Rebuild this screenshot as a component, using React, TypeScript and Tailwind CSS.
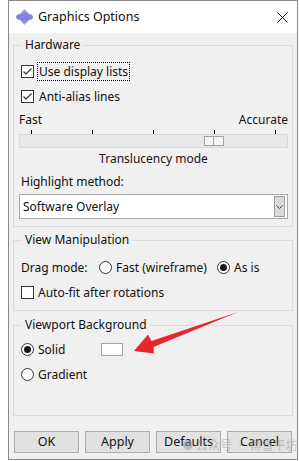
import React from "react";

const Check = ({ checked }: { checked: boolean }) => (
  <span className="w-[13px] h-[13px] border border-[#333333] bg-white flex items-center justify-center shrink-0">
    {checked && (
      <svg width="11" height="11" viewBox="0 0 11 11">
        <path d="M1.5 5.5 L4 8 L9.5 2.5" stroke="#333333" strokeWidth="1.2" fill="none" />
      </svg>
    )}
  </span>
);

const Radio = ({ checked }: { checked: boolean }) => (
  <span className="w-[13px] h-[13px] rounded-full border border-[#333333] bg-white flex items-center justify-center shrink-0">
    {checked && <span className="w-[7px] h-[7px] rounded-full bg-[#1a1a1a]" />}
  </span>
);

const CheckRow = ({ label, checked, focus }: { label: string; checked: boolean; focus?: boolean }) => (
  <div className="flex items-center h-[25px] ml-[2px]">
    <Check checked={checked} />
    <span className={`ml-[3px] px-[1px] leading-[17px] border border-dotted ${focus ? "border-black" : "border-transparent"}`}>{label}</span>
  </div>
);

const Group = ({ title, className, children }: { title: string; className?: string; children: React.ReactNode }) => (
  <fieldset className={`border border-[#dcdcdc] ${className ?? ""}`}>
    <legend className="ml-[8px] px-[3px] leading-[18px]">{title}</legend>
    {children}
  </fieldset>
);

export default function App() {
  return (
    <div className="w-[299px] h-[461px] bg-white pl-[8px] font-['Noto_Sans','Noto_Sans_CJK_SC',sans-serif] text-[12px] text-[#111111] relative overflow-hidden">
      <div className="w-[290px] h-[460px] border border-[#8a8a8a] flex flex-col bg-[#f0f0f0]">
        {/* title bar */}
        <div className="h-[32px] bg-white flex items-center pl-[7px] pr-[9px] shrink-0">
          <svg width="17" height="16" viewBox="0 0 17 16">
            <defs>
              <linearGradient id="ic" x1="0" y1="0" x2="0" y2="1">
                <stop offset="0" stopColor="#a9a9ec" />
                <stop offset="0.5" stopColor="#7373cf" />
                <stop offset="1" stopColor="#a9a9ec" />
              </linearGradient>
            </defs>
            <path d="M8.5 0 L13 5 L16 5.8 L17 8 L16 10.2 L13 11 L8.5 16 L4 11 L1 10.2 L0 8 L1 5.8 L4 5 Z" fill="url(#ic)" />
            <rect x="1" y="6.3" width="15" height="3.4" fill="#8585d9" />
          </svg>
          <span className="ml-[5px] text-[12.5px]">Graphics Options</span>
          <svg className="ml-auto" width="11" height="11" viewBox="0 0 11 11">
            <path d="M0.5 0.5 L10.5 10.5 M10.5 0.5 L0.5 10.5" stroke="#111" strokeWidth="1" />
          </svg>
        </div>

        <div className="flex-1 flex flex-col px-[4px] pt-[3px]">
          <Group title="Hardware">
            <div className="pl-[5px] pr-[4px] pt-[5px] pb-[7px]">
              <CheckRow label="Use display lists" checked focus />
              <CheckRow label="Anti-alias lines" checked />
              <div className="flex justify-between leading-[16px] mt-[3px]">
                <span>Fast</span>
                <span>Accurate</span>
              </div>
              <div className="flex justify-between px-[12px] h-[4px] mt-[2px]">
                <span className="w-px h-full bg-black" />
                <span className="w-px h-full bg-black" />
                <span className="w-px h-full bg-black" />
                <span className="w-px h-full bg-black" />
                <span className="w-px h-full bg-black" />
              </div>
              <div className="relative h-[14px] bg-[#e7e8e8] border border-[#d9d9d9]">
                <div className="absolute left-[184px] top-[1px] flex h-[10px]">
                  <span className="w-[10px] h-full bg-[#f6f6f6] border border-[#a3a3a3]" />
                  <span className="w-[10px] h-full bg-[#f6f6f6] border border-l-0 border-[#a3a3a3]" />
                </div>
              </div>
              <div className="text-center leading-[18px] mt-[2px] text-[#221322]">Translucency mode</div>
              <div className="leading-[18px] mt-[5px] pl-[2px]">Highlight method:</div>
              <div className="mt-[3px] h-[25px] bg-white border border-[#a9a9a9] flex items-center pl-[3px] pr-[2px]">
                <span>Software Overlay</span>
                <span className="ml-auto w-[11px] h-[21px] bg-[#dadada] border border-[#9e9e9e] flex items-center justify-center">
                  <svg width="7" height="4" viewBox="0 0 7 4">
                    <path d="M0.5 0.5 L3.5 3.5 L6.5 0.5" stroke="#444" strokeWidth="1" fill="none" />
                  </svg>
                </span>
              </div>
            </div>
          </Group>

          <Group title="View Manipulation" className="mt-[4px]">
            <div className="pl-[7px] pt-[6px] pb-[5px]">
              <div className="flex items-center h-[25px]">
                <span className="w-[78px]">Drag mode:</span>
                <div className="w-[118px] flex items-center">
                  <Radio checked={false} />
                  <span className="ml-[4px]">Fast (wireframe)</span>
                </div>
                <div className="flex items-center">
                  <Radio checked />
                  <span className="ml-[4px]">As is</span>
                </div>
              </div>
              <div className="flex items-center h-[25px]">
                <Check checked={false} />
                <span className="ml-[4px]">Auto-fit after rotations</span>
              </div>
            </div>
          </Group>

          <Group title="Viewport Background" className="mt-[5px]">
            <div className="pl-[7px] pt-[3px] pb-[28px]">
              <div className="flex items-center h-[25px]">
                <Radio checked />
                <span className="ml-[4px] w-[63px]">Solid</span>
                <span className="w-[22px] h-[13px] bg-white border border-[#a5a5a5]" />
              </div>
              <div className="flex items-center h-[25px]">
                <Radio checked={false} />
                <span className="ml-[4px]">Gradient</span>
              </div>
            </div>
          </Group>

          <div className="flex gap-[6px] pl-[1px] mt-[15px]">
            {["OK", "Apply", "Defaults", "Cancel"].map((b) => (
              <button key={b} className="w-[65px] h-[22px] bg-[#e1e1e1] border border-[#adadad] text-[12.5px] leading-none">
                {b}
              </button>
            ))}
          </div>
        </div>
      </div>

      {/* annotation arrow */}
      <svg className="absolute left-0 top-0 pointer-events-none" width="299" height="461" viewBox="0 0 299 461">
        <path d="M134 351 L148 334.5 L151.5 341 L238 312 L153.5 347 L154 353.5 Z" fill="#e8262b" />
      </svg>

      {/* watermark */}
      <div className="absolute left-[183px] top-[436px] flex items-center gap-[3px] opacity-50 pointer-events-none">
        <span className="w-[10px] h-[10px] rounded-full bg-[#9a9a9a]" />
        <span className="text-[12px] text-[#9a9a9a] font-['Noto_Sans_CJK_SC',sans-serif]">公众号 · 博雪平坊</span>
      </div>
    </div>
  );
}
